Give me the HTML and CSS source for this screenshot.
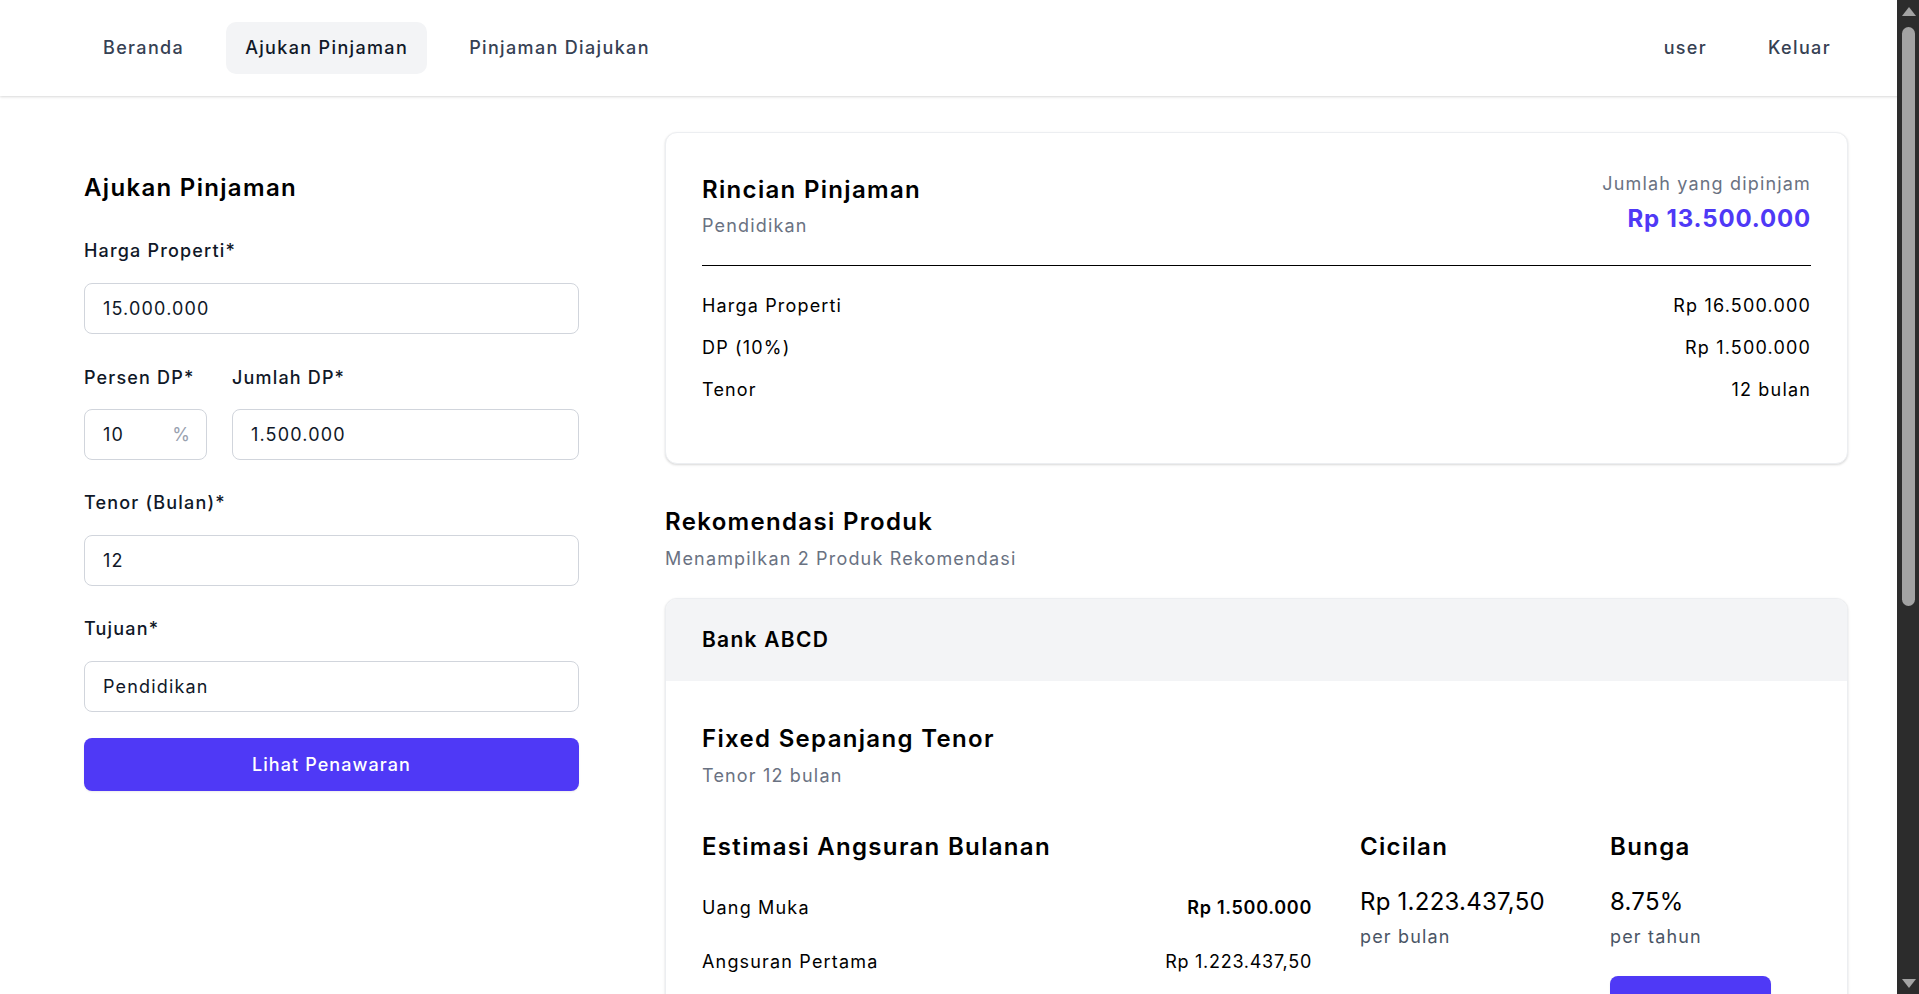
FILE: index.html
```html
<!DOCTYPE html>
<html lang="id">
<head>
<meta charset="utf-8">
<title>Ajukan Pinjaman</title>
<link rel="stylesheet" href="styles.css">
</head>
<body>
<nav class="topbar">
  <div class="nav-group">
    <a class="nav-link" href="#">Beranda</a>
    <a class="nav-link active" href="#">Ajukan Pinjaman</a>
    <a class="nav-link" href="#">Pinjaman Diajukan</a>
  </div>
  <div class="nav-group">
    <a class="nav-link" href="#">user</a>
    <a class="nav-link" href="#">Keluar</a>
  </div>
</nav>

<main class="page">
  <section class="form-col">
    <h1 class="title">Ajukan Pinjaman</h1>
    <form class="form">
      <div class="field">
        <label class="label">Harga Properti*</label>
        <input class="input" type="text" value="15.000.000">
      </div>
      <div class="field-row">
        <div class="field field-small">
          <label class="label">Persen DP*</label>
          <div class="input input-suffix">
            <input class="bare" type="text" value="10">
            <span class="suffix">%</span>
          </div>
        </div>
        <div class="field field-grow">
          <label class="label">Jumlah DP*</label>
          <input class="input" type="text" value="1.500.000">
        </div>
      </div>
      <div class="field">
        <label class="label">Tenor (Bulan)*</label>
        <input class="input" type="text" value="12">
      </div>
      <div class="field">
        <label class="label">Tujuan*</label>
        <input class="input" type="text" value="Pendidikan">
      </div>
      <button class="btn btn-block" type="button">Lihat Penawaran</button>
    </form>
  </section>

  <section class="result-col">
    <div class="card summary">
      <div class="summary-head">
        <div>
          <h2 class="title">Rincian Pinjaman</h2>
          <p class="muted">Pendidikan</p>
        </div>
        <div class="align-right">
          <p class="muted">Jumlah yang dipinjam</p>
          <p class="amount">Rp 13.500.000</p>
        </div>
      </div>
      <hr class="divider">
      <div class="rows">
        <div class="row"><span>Harga Properti</span><span>Rp 16.500.000</span></div>
        <div class="row"><span>DP (10%)</span><span>Rp 1.500.000</span></div>
        <div class="row"><span>Tenor</span><span>12 bulan</span></div>
      </div>
    </div>

    <div class="rec-head">
      <h2 class="title">Rekomendasi Produk</h2>
      <p class="muted">Menampilkan 2 Produk Rekomendasi</p>
    </div>

    <div class="card product">
      <div class="product-bank">Bank ABCD</div>
      <div class="product-body">
        <h3 class="title">Fixed Sepanjang Tenor</h3>
        <p class="muted">Tenor 12 bulan</p>
        <div class="product-grid">
          <div class="est">
            <h3 class="title">Estimasi Angsuran Bulanan</h3>
            <div class="est-rows">
              <div class="row"><span>Uang Muka</span><span class="num strong">Rp 1.500.000</span></div>
              <div class="row"><span>Angsuran Pertama</span><span class="num">Rp 1.223.437,50</span></div>
              <div class="row"><span>Total Angsuran</span><span class="num">Rp 14.681.250</span></div>
            </div>
          </div>
          <div class="stat">
            <h3 class="title">Cicilan</h3>
            <p class="stat-value">Rp 1.223.437,50</p>
            <p class="stat-note">per bulan</p>
          </div>
          <div class="stat stat-last">
            <h3 class="title">Bunga</h3>
            <p class="stat-value">8.75%</p>
            <p class="stat-note">per tahun</p>
            <button class="btn btn-apply" type="button">Ajukan</button>
          </div>
        </div>
      </div>
    </div>

    <div class="card product">
      <div class="product-bank">Bank XYZ</div>
      <div class="product-body">
        <h3 class="title">Fixed 1 Tahun</h3>
        <p class="muted">Tenor 12 bulan</p>
        <div class="product-grid">
          <div class="est">
            <h3 class="title">Estimasi Angsuran Bulanan</h3>
            <div class="est-rows">
              <div class="row"><span>Uang Muka</span><span class="num strong">Rp 1.500.000</span></div>
              <div class="row"><span>Angsuran Pertama</span><span class="num">Rp 1.230.312,50</span></div>
            </div>
          </div>
          <div class="stat">
            <h3 class="title">Cicilan</h3>
            <p class="stat-value">Rp 1.230.312,50</p>
            <p class="stat-note">per bulan</p>
          </div>
          <div class="stat stat-last">
            <h3 class="title">Bunga</h3>
            <p class="stat-value">9.25%</p>
            <p class="stat-note">per tahun</p>
            <button class="btn btn-apply" type="button">Ajukan</button>
          </div>
        </div>
      </div>
    </div>
  </section>
</main>

<div class="scrollbar" aria-hidden="true">
  <span class="sb-arrow sb-up"></span>
  <span class="sb-thumb"></span>
  <span class="sb-arrow sb-down"></span>
</div>
</body>
</html>
```

FILE: styles.css
```css
* { box-sizing: border-box; }

html, body {
  margin: 0;
  padding: 0;
  background: #ffffff;
}

body {
  font-family: "Inter", "Liberation Sans", sans-serif;
  font-size: 18px;
  line-height: 28px;
  letter-spacing: 0.065em;
  color: #000000;
}

p, h1, h2, h3 { margin: 0; }

/* ---------- window scrollbar (drawn over the page edge) ---------- */
.scrollbar {
  position: fixed;
  top: 0;
  right: 0;
  width: 22px;
  height: 100vh;
  background: #2c2c2c;
  display: flex;
  flex-direction: column;
  align-items: center;
  padding-left: 1px;
}

.sb-arrow {
  width: 0;
  height: 0;
  border-left: 7px solid transparent;
  border-right: 7px solid transparent;
}

.sb-up {
  margin-top: 7px;
  border-bottom: 9px solid #a3a3a3;
}

.sb-down {
  margin-top: auto;
  margin-bottom: 6px;
  border-top: 9px solid #a3a3a3;
}

.sb-thumb {
  width: 13px;
  height: 579px;
  margin-top: 11px;
  border-radius: 7px;
  background: #a3a3a3;
}

/* ---------- top bar ---------- */
.topbar {
  height: 96px;
  display: flex;
  align-items: center;
  justify-content: space-between;
  padding: 0 69px 0 84px;
  background: #ffffff;
  box-shadow: 0 1px 3px rgba(0, 0, 0, 0.10), 0 1px 2px rgba(0, 0, 0, 0.06);
}

.nav-group {
  display: flex;
  align-items: center;
  gap: 23px;
}

.nav-link {
  display: block;
  height: 52px;
  line-height: 52px;
  padding: 0 19px;
  border-radius: 10px;
  color: #364153;
  text-decoration: none;
  font-size: 18px;
  font-weight: 500;
  letter-spacing: 0.075em;
}

.nav-link.active {
  background: #f3f4f6;
  color: #101828;
}

/* ---------- layout ---------- */
.page {
  display: grid;
  grid-template-columns: 495px 1fr;
  gap: 86px;
  padding: 36px 71px 56px 84px;
  align-items: start;
}

.title {
  font-size: 24px;
  line-height: 32px;
  font-weight: 600;
  letter-spacing: 0.055em;
  color: #000000;
}

.muted {
  color: #6a7282;
  font-size: 18px;
  line-height: 28px;
}

/* ---------- form ---------- */
.form-col {
  padding-top: 40px;
}

.form {
  margin-top: 33px;
  display: flex;
  flex-direction: column;
  gap: 29px;
}

.field {
  display: flex;
  flex-direction: column;
  gap: 18px;
}

.field-row {
  display: flex;
  gap: 25px;
  margin-top: 1px;
}

.field-small { width: 123px; flex: none; }
.field-grow { flex: 1; }

.label {
  font-size: 18px;
  line-height: 28px;
  font-weight: 500;
  color: #101828;
}

.field-row .field { gap: 17px; }

.input {
  height: 51px;
  width: 100%;
  border: 1px solid #d1d5dc;
  border-radius: 8px;
  padding: 0 18px;
  font-family: inherit;
  font-size: 18px;
  letter-spacing: 0.065em;
  color: #101828;
  background: #ffffff;
  outline: none;
}

.input-suffix {
  display: flex;
  align-items: center;
  gap: 6px;
  padding-right: 16px;
}

.bare {
  flex: 1;
  min-width: 0;
  border: 0;
  padding: 0;
  font-family: inherit;
  font-size: 18px;
  letter-spacing: 0.065em;
  color: #101828;
  outline: none;
  background: transparent;
}

.suffix {
  color: #99a1af;
  font-size: 18px;
  letter-spacing: 0;
}

.btn {
  border: 0;
  border-radius: 8px;
  background: #4f39f6;
  color: #ffffff;
  font-family: inherit;
  font-size: 18px;
  font-weight: 500;
  letter-spacing: 0.06em;
  cursor: pointer;
  box-shadow: 0 1px 2px rgba(0, 0, 0, 0.08);
}

.btn-block {
  height: 53px;
  width: 100%;
  margin-top: -3px;
}

/* ---------- cards ---------- */
.result-col {
  display: flex;
  flex-direction: column;
}

.card {
  background: #ffffff;
  border: 1px solid #eceef1;
  border-radius: 12px;
  box-shadow: 0 1px 3px rgba(0, 0, 0, 0.10), 0 1px 2px rgba(0, 0, 0, 0.06);
  overflow: hidden;
}

.summary {
  padding: 41px 36px 59px;
}

.summary-head {
  display: flex;
  justify-content: space-between;
  align-items: flex-start;
}

.summary-head .title { margin-bottom: 6px; }

.align-right { text-align: right; margin-top: -4px; }

.amount {
  font-size: 24px;
  line-height: 32px;
  font-weight: 700;
  letter-spacing: 0.035em;
  color: #4f39f6;
  margin-top: 5px;
}

.divider {
  border: 0;
  border-top: 1px solid #000000;
  margin: 25px 0 26px;
}

.rows {
  display: flex;
  flex-direction: column;
  gap: 14px;
}

.row {
  display: flex;
  justify-content: space-between;
  font-size: 18px;
  line-height: 28px;
  color: #000000;
}

.num { letter-spacing: 0.04em; }

.strong { font-weight: 600; }

/* ---------- recommendation ---------- */
.rec-head {
  margin: 42px 0 25px;
}

.rec-head .title { margin-bottom: 7px; }

.product { margin-bottom: 24px; }

.product-bank {
  height: 82px;
  display: flex;
  align-items: center;
  padding: 0 36px;
  background: #f3f4f6;
  font-size: 21px;
  font-weight: 600;
  letter-spacing: 0.06em;
  color: #000000;
}

.product-body {
  padding: 42px 36px 36px;
}

.product-body > .title { margin-bottom: 7px; }

.product-grid {
  display: flex;
  margin-top: 41px;
}

.est {
  width: 610px;
  flex: none;
  margin-right: 48px;
}

.est-rows {
  margin-top: 31px;
  display: flex;
  flex-direction: column;
  gap: 26px;
}

.stat {
  width: 250px;
  flex: none;
}

.stat-last { flex: 1; width: auto; }

.stat-value {
  margin-top: 23px;
  font-size: 24px;
  line-height: 32px;
  letter-spacing: 0.01em;
  color: #000000;
}

.stat-note {
  margin-top: 5px;
  font-size: 18px;
  line-height: 28px;
  color: #4a5565;
}

.btn-apply {
  margin-top: 25px;
  width: 161px;
  height: 52px;
}
```
